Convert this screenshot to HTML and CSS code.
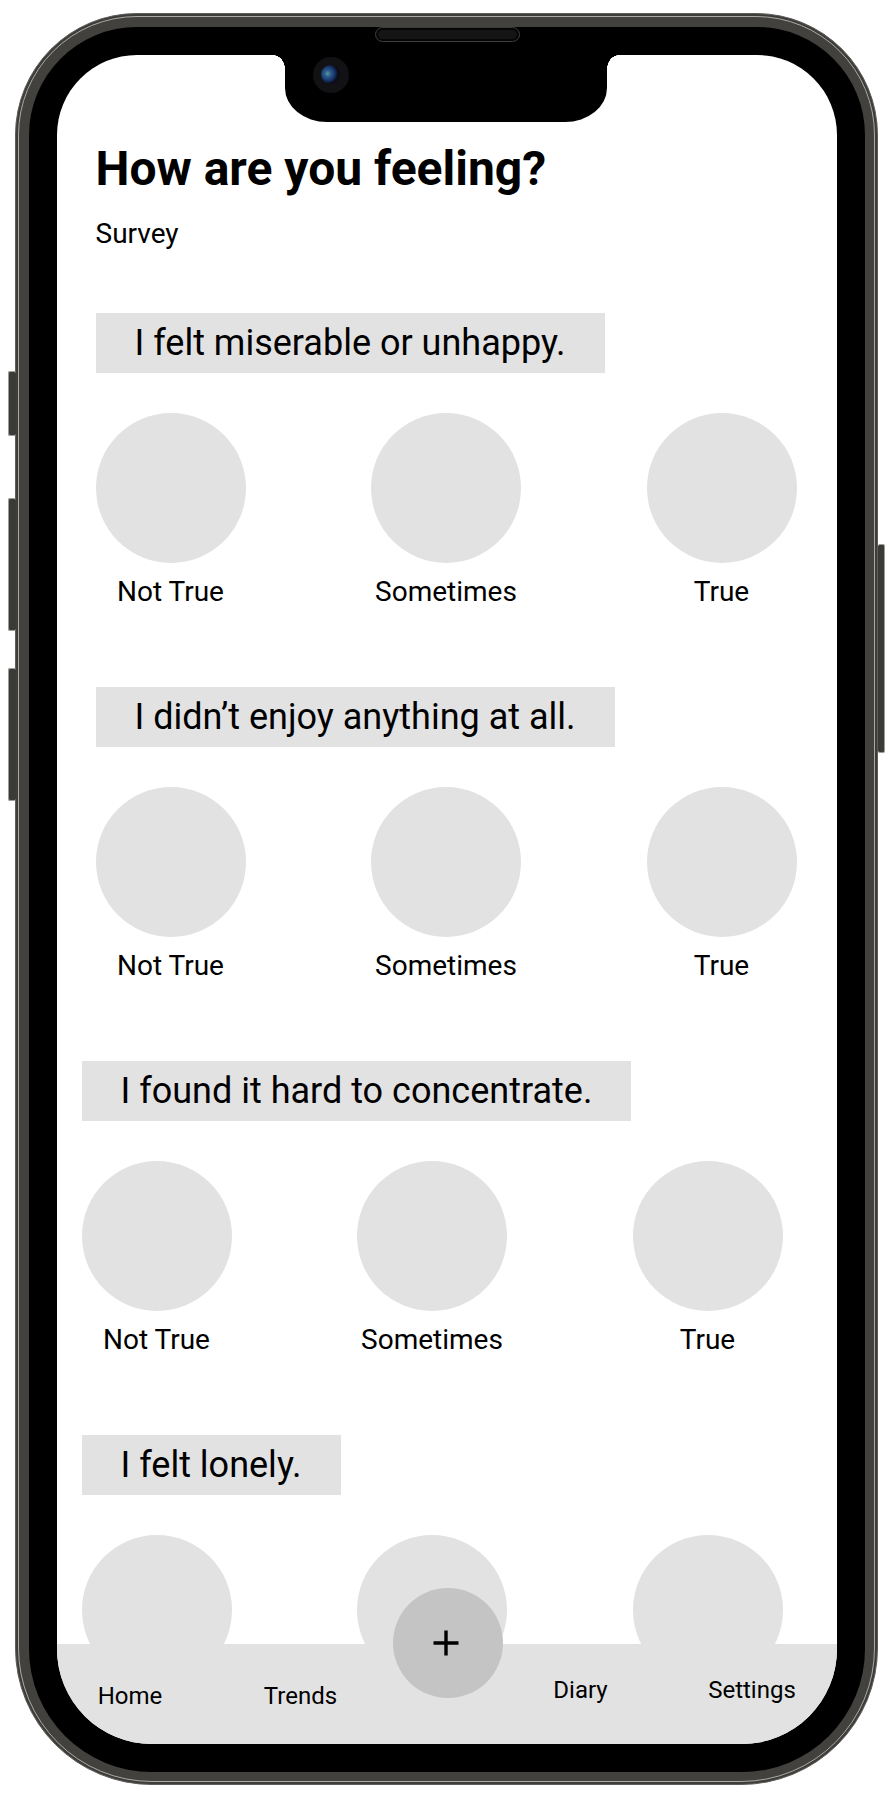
FILE: index.html
```html
<!DOCTYPE html>
<html lang="en">
<head>
<meta charset="utf-8">
<title>How are you feeling?</title>
<link rel="stylesheet" href="styles.css">
</head>
<body>
<div class="phone">
  <span class="hw-btn hw-l1"></span>
  <span class="hw-btn hw-l2"></span>
  <span class="hw-btn hw-l3"></span>
  <span class="hw-btn hw-r1"></span>
  <div class="rim">
    <div class="bezel">
      <span class="speaker"></span>
      <div class="screen">
        <div class="notch"><span class="camera"><span class="lens"></span></span></div>
        <main class="content">
          <h1 class="title">How are you feeling?</h1>
          <p class="subtitle">Survey</p>

          <section class="question">
            <div class="q-label">I felt miserable or unhappy.</div>
            <div class="options">
              <div class="option"><span class="dot"></span><span class="opt-text">Not True</span></div>
              <div class="option"><span class="dot"></span><span class="opt-text">Sometimes</span></div>
              <div class="option"><span class="dot"></span><span class="opt-text">True</span></div>
            </div>
          </section>

          <section class="question">
            <div class="q-label">I didn’t enjoy anything at all.</div>
            <div class="options">
              <div class="option"><span class="dot"></span><span class="opt-text">Not True</span></div>
              <div class="option"><span class="dot"></span><span class="opt-text">Sometimes</span></div>
              <div class="option"><span class="dot"></span><span class="opt-text">True</span></div>
            </div>
          </section>

          <section class="question shift">
            <div class="q-label">I found it hard to concentrate.</div>
            <div class="options">
              <div class="option"><span class="dot"></span><span class="opt-text">Not True</span></div>
              <div class="option"><span class="dot"></span><span class="opt-text">Sometimes</span></div>
              <div class="option"><span class="dot"></span><span class="opt-text">True</span></div>
            </div>
          </section>

          <section class="question shift">
            <div class="q-label">I felt lonely.</div>
            <div class="options">
              <div class="option"><span class="dot"></span></div>
              <div class="option"><span class="dot"></span></div>
              <div class="option"><span class="dot"></span></div>
            </div>
          </section>
        </main>

        <nav class="tabbar">
          <span class="tab">Home</span>
          <span class="tab tab-trends">Trends</span>
          <span class="fab">
            <svg class="plus" width="26" height="26" viewBox="0 0 26 26" aria-hidden="true">
              <path d="M13 0.5V25.5M0.5 13H25.5" stroke="#000" stroke-width="3.4" fill="none"/>
            </svg>
          </span>
          <span class="tab tab-high">Diary</span>
          <span class="tab tab-high tab-settings">Settings</span>
        </nav>
      </div>
    </div>
  </div>
</div>
</body>
</html>
```

FILE: styles.css
```css
* { box-sizing: border-box; }

html, body {
  margin: 0;
  padding: 0;
  background: #fff;
}

body {
  width: 893px;
  height: 1799px;
  overflow: hidden;
  font-family: Roboto, "Noto Sans", "Liberation Sans", sans-serif;
  color: #000;
}

/* ---------- device frame ---------- */
.phone {
  position: relative;
  margin: 13px 0 0 15px;
  width: 863px;
  height: 1772px;
  padding: 2px;
  border: 1px solid #5d5d5b;
  border-radius: 122px 122px 137px 137px;
  background: #3e3d39;
}

.rim {
  height: 100%;
  padding: 9.5px;
  border: 1.5px solid #aaa9a6;
  border-radius: 119px 119px 134px 134px;
  background: #42413d;
}

.bezel {
  position: relative;
  height: 100%;
  padding: 28px;
  border-radius: 108px 108px 123px 123px;
  background: #000;
}

.speaker {
  position: absolute;
  top: 0;
  left: 346px;
  width: 145px;
  height: 15px;
  border: 1.5px solid #3c3c3a;
  border-radius: 8px;
  background: #151515;
  box-shadow: inset 0 0 0 2px #050505;
}

.hw-btn {
  position: absolute;
  width: 8px;
  background: #3b3a37;
  border: 1px solid #9c9c9a;
  border-radius: 2px;
}
.hw-l1 { left: -8px; top: 357px; height: 65px; border-right: none; }
.hw-l2 { left: -8px; top: 484px; height: 133px; border-right: none; }
.hw-l3 { left: -8px; top: 654px; height: 133px; border-right: none; }
.hw-r1 { left: 862px; top: 530px; height: 209px; width: 7px; border-left: none; }

.screen {
  position: relative;
  height: 100%;
  display: flex;
  flex-direction: column;
  overflow: hidden;
  border-radius: 80px 80px 95px 95px;
  background: #fff;
}

.notch {
  position: absolute;
  top: 0;
  left: 228px;
  width: 322px;
  height: 67px;
  background: #000;
  border-radius: 0 0 42px 42px / 0 0 34px 34px;
  z-index: 3;
}
.notch::before,
.notch::after {
  content: "";
  position: absolute;
  top: 0;
  width: 12px;
  height: 14px;
}
.notch::before {
  left: -12px;
  background: radial-gradient(12px 14px at 0 100%, transparent 98%, #000 100%);
}
.notch::after {
  right: -12px;
  background: radial-gradient(12px 14px at 100% 100%, transparent 98%, #000 100%);
}

.camera {
  position: absolute;
  left: 28px;
  top: 2px;
  width: 36px;
  height: 36px;
  border-radius: 50%;
  background: #121214;
  display: flex;
  align-items: center;
  justify-content: center;
}
.lens {
  width: 19px;
  height: 19px;
  border-radius: 50%;
  background: radial-gradient(circle at 35% 45%, #5c9a8a 0, #2f5f8f 3px, #1c3f78 6px, #0f1e3d 9px, #0a0d18 10px);
}

/* ---------- content ---------- */
.content {
  flex: 1;
  min-height: 0;
  overflow: hidden;
  padding: 86px 40px 0 39px;
}

.title {
  margin: 0;
  font-size: 48px;
  font-weight: 700;
  line-height: 56px;
}

.subtitle {
  margin: 21px 0 0;
  font-size: 28px;
  line-height: 32px;
}

.question {
  display: flex;
  flex-direction: column;
  align-items: flex-start;
  margin-top: 63px;
}
.question + .question { margin-top: 79px; }
.question.shift {
  margin-left: -14px;
  margin-right: 14px;
}

.q-label {
  height: 60px;
  padding: 0 39px;
  background: #e2e2e2;
  font-size: 36px;
  line-height: 60px;
  white-space: nowrap;
}

.options {
  align-self: stretch;
  display: flex;
  justify-content: space-between;
  margin-top: 40px;
}

.option {
  width: 150px;
  display: flex;
  flex-direction: column;
  align-items: center;
}

.dot {
  flex: none;
  width: 150px;
  height: 150px;
  border-radius: 50%;
  background: #e2e2e2;
}

.opt-text {
  margin-top: 13px;
  font-size: 28px;
  line-height: 32px;
  white-space: nowrap;
}

/* ---------- tab bar ---------- */
.tabbar {
  flex: none;
  position: relative;
  z-index: 2;
  height: 100px;
  display: grid;
  grid-template-columns: 147px 190px 108px 158px 176px;
  align-items: start;
  background: #e2e2e2;
}

.tab {
  padding-top: 38px;
  font-size: 24px;
  line-height: 28px;
  text-align: center;
  white-space: nowrap;
}
.tab-trends { padding-left: 4px; }
.tab-high { padding-top: 32px; }
.tab-settings { padding-left: 9px; }

.fab {
  justify-self: center;
  width: 110px;
  height: 110px;
  margin-top: -56px;
  border-radius: 50%;
  background: #c4c4c4;
  display: flex;
  align-items: center;
  justify-content: center;
}

.plus { display: block; margin-left: -3px; }
```
